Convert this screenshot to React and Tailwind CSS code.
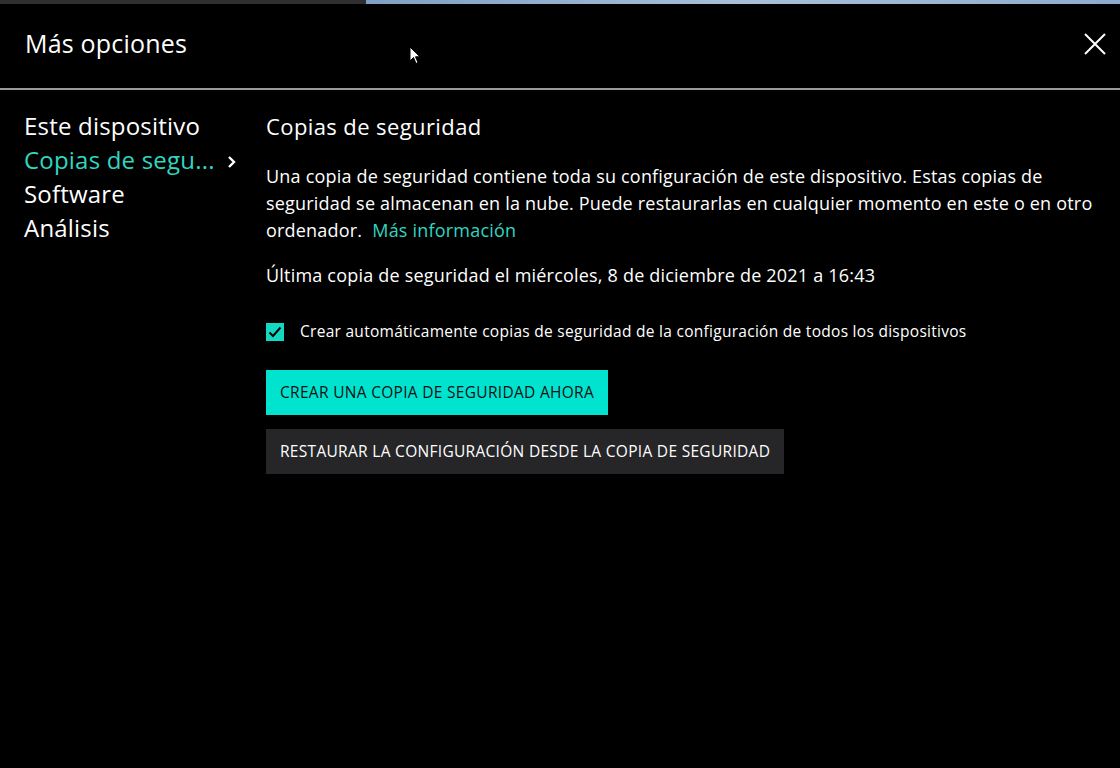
import React from "react";

const font = { fontFamily: "'Open Sans', 'Noto Sans', sans-serif" };

const CloseIcon = () => (
  <svg width="24" height="24" viewBox="0 0 24 24" className="text-white">
    <path d="M2 2 L22 22 M22 2 L2 22" stroke="currentColor" strokeWidth="2" fill="none" />
  </svg>
);

const Cursor = () => (
  <svg width="14" height="20" viewBox="0 0 14 20" className="absolute left-[409px] top-[46px]">
    <path d="M1 1 L1 15 L4.5 11.5 L7 17.5 L9 16.5 L6.5 10.8 L11 10.8 Z" fill="#fff" stroke="#000" strokeWidth="1" />
  </svg>
);

const Sidebar = () => {
  const items = ["Este dispositivo", "Copias de segu...", "Software", "Análisis"];
  return (
    <nav className="w-[266px] shrink-0 pl-6 pt-[19px] flex flex-col">
      {items.map((item, i) => (
        <div
          key={item}
          className={`flex items-center h-[34px] text-[24px] tracking-[0.2px] ${i === 1 ? "text-[#2fd6c0]" : "text-white"}`}
        >
          <span>{item}</span>
          {i === 1 && (
            <svg width="10" height="14" viewBox="0 0 10 14" className="ml-[12px] mt-[3px]">
              <path d="M2 2 L7 7 L2 12" stroke="#fff" strokeWidth="2.4" fill="none" />
            </svg>
          )}
        </div>
      ))}
    </nav>
  );
};

const App = () => {
  return (
    <div className="relative w-[1120px] h-[768px] bg-black overflow-hidden" style={font}>
      {/* Top strip */}
      <div className="flex h-[4px]">
        <div className="w-[366px] bg-[#2f2f2f]" />
        <div className="flex-1 bg-gradient-to-r from-[#7f9fc4] via-[#a9bfd8] to-[#8fabcc]" />
      </div>

      {/* Header */}
      <header className="flex items-center justify-between h-[86px] pl-[25px] pr-[13px] border-b-2 border-[#9a9a9a]">
        <h1 className="text-[25px] tracking-[0.2px] text-white pb-[4px]">Más opciones</h1>
        <button className="pb-[4px]">
          <CloseIcon />
        </button>
      </header>

      <div className="flex">
        <Sidebar />

        {/* Content */}
        <main className="pt-[20px] flex flex-col">
          <h2 className="text-[22px] tracking-[0.4px] text-white leading-[32px]">Copias de seguridad</h2>
          <p className="mt-[21px] w-[840px] text-[18px] tracking-[0.2px] leading-[27px] text-white">
            Una copia de seguridad contiene toda su configuración de este dispositivo. Estas copias de seguridad se
            almacenan en la nube. Puede restaurarlas en cualquier momento en este o en otro ordenador.
            <span className="ml-[10px] text-[#2fd6c0]">Más información</span>
          </p>
          <p className="mt-[18px] text-[18px] tracking-[0.2px] leading-[27px] text-white">
            Última copia de seguridad el miércoles, 8 de diciembre de 2021 a 16:43
          </p>

          <label className="mt-[31px] flex items-center gap-[16px]">
            <span className="w-[18px] h-[18px] bg-[#14d9c2] flex items-center justify-center">
              <svg width="14" height="12" viewBox="0 0 14 12">
                <path d="M1.5 6.5 L5 10 L12.5 1.5" stroke="#000" strokeWidth="2" fill="none" />
              </svg>
            </span>
            <span className="text-[15.5px] tracking-[0.28px] text-white">
              Crear automáticamente copias de seguridad de la configuración de todos los dispositivos
            </span>
          </label>

          <div className="mt-[27px] flex flex-col items-start gap-[14px]">
            <button className="h-[45px] px-[14px] bg-[#00e4cf] text-[#111] text-[15.5px] tracking-[0.3px]">
              CREAR UNA COPIA DE SEGURIDAD AHORA
            </button>
            <button className="h-[45px] px-[14px] bg-[#262628] text-white text-[15.5px] tracking-[0.3px]">
              RESTAURAR LA CONFIGURACIÓN DESDE LA COPIA DE SEGURIDAD
            </button>
          </div>
        </main>
      </div>

      <Cursor />
    </div>
  );
};

export default App;
